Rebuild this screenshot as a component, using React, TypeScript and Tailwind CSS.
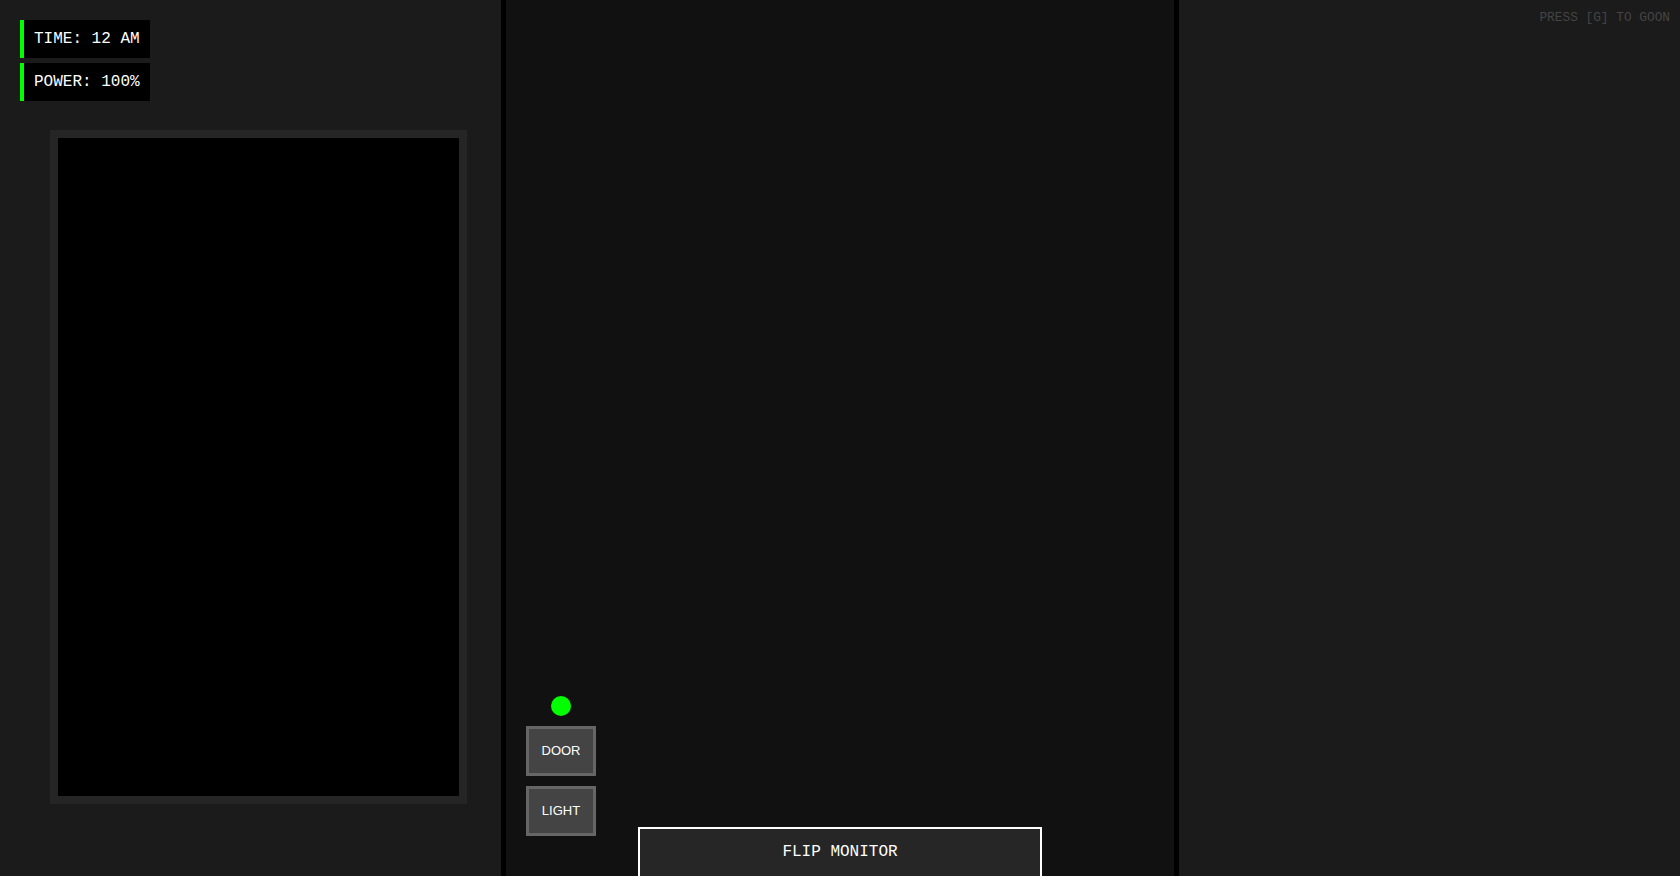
export default function App() {
  return (
    <div className="relative flex h-screen w-full overflow-hidden bg-[#1b1b1b] font-['Liberation_Mono',monospace] text-white">
      {/* Left: monitor */}
      <div className="w-[501px] shrink-0 bg-[#1b1b1b] pl-[50px] pt-[130px]">
        <div className="h-[674px] w-[417px] border-8 border-[#252525] bg-black" />
      </div>

      {/* Center: office */}
      <div className="relative w-[678px] shrink-0 border-x-[5px] border-black bg-[#111]">
        <div className="absolute bottom-[40px] left-[20px] flex flex-col items-center gap-[10px]">
          <div className="h-[20px] w-[20px] rounded-full bg-[#00ff00]" />
          <button className="h-[50px] w-[70px] border-[3px] border-[#666] bg-[#444] font-['Liberation_Sans',Arial,sans-serif] text-[13px] text-white">
            DOOR
          </button>
          <button className="h-[50px] w-[70px] border-[3px] border-[#666] bg-[#444] font-['Liberation_Sans',Arial,sans-serif] text-[13px] text-white">
            LIGHT
          </button>
        </div>
        <button className="absolute left-1/2 top-[827px] h-[60px] w-[404px] -translate-x-1/2 border-2 border-white bg-[#262626] pt-[14px] pb-[24px] text-[16px] leading-[18px] text-white">
          FLIP MONITOR
        </button>
      </div>

      {/* Right */}
      <div className="flex-1 bg-[#1b1b1b]" />

      {/* HUD */}
      <div className="absolute left-[20px] top-[20px] flex flex-col gap-[5px]">
        <div className="border-l-4 border-[#00ff00] bg-black py-[10px] pl-[10px] pr-[10px] text-[16px] leading-[18px]">
          TIME: 12 AM
        </div>
        <div className="border-l-4 border-[#00ff00] bg-black py-[10px] pl-[10px] pr-[10px] text-[16px] leading-[18px]">
          POWER: 100%
        </div>
      </div>

      <div className="absolute right-[10px] top-[10px] text-[12.8px] leading-[16px] text-[#444]">
        PRESS [G] TO GOON
      </div>
    </div>
  );
}
